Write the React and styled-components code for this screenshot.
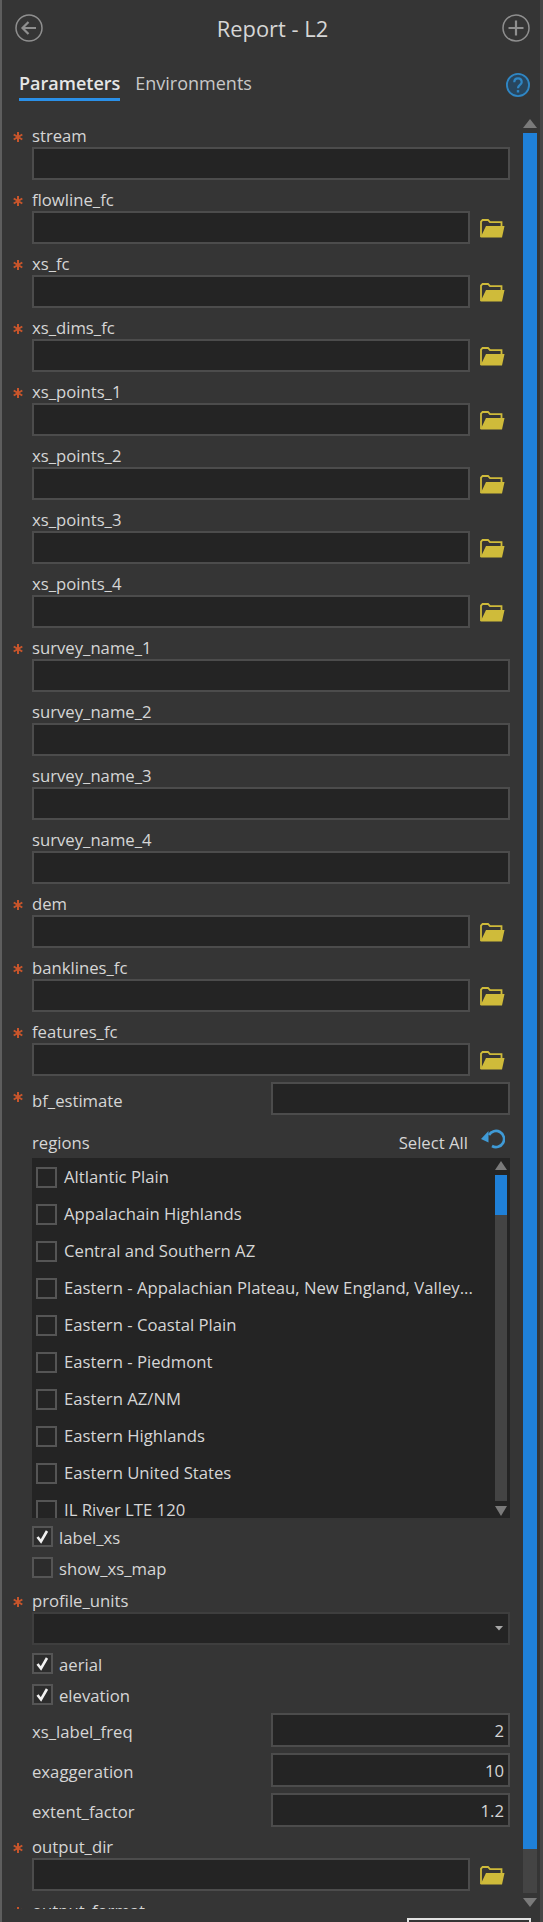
import React from 'react'
import styled, { createGlobalStyle } from 'styled-components'

const GlobalStyle = createGlobalStyle`
  html, body {
    margin: 0;
    padding: 0;
    background: #353535;
  }
  * {
    box-sizing: border-box;
  }
`

const Panel = styled.div`
  width: 543px;
  height: 1922px;
  overflow: hidden;
  background: #353535;
  border-left: 2px solid #5e5e5e;
  border-right: 3px solid #454545;
  color: #d6d6d6;
  font-family: "Open Sans", "Noto Sans", sans-serif;
  font-size: 16.7px;
`

const Header = styled.header`
  height: 56px;
  padding: 0 10px 0 13px;
  display: flex;
  align-items: center;
  justify-content: space-between;
`

const Title = styled.h1`
  margin: 0;
  font-size: 21.9px;
  font-weight: 400;
  color: #d6d6d6;
`

const TabBar = styled.div`
  height: 55px;
  display: flex;
  align-items: flex-start;
  padding: 12px 10px 0 17px;
  gap: 15px;
`

const Tab = styled.div`
  height: 33px;
  font-size: 18px;
  line-height: 30px;
  font-weight: ${p => (p.$active ? 600 : 400)};
  color: ${p => (p.$active ? '#e6e6e6' : '#c8c8c8')};
  border-bottom: 3px solid ${p => (p.$active ? '#2a90e8' : 'transparent')};
`

const Help = styled.svg`
  margin-left: auto;
  margin-top: 5px;
`

const Body = styled.div`
  display: flex;
  align-items: flex-start;
  height: 1798px;
`

const Form = styled.div`
  width: 510px;
  height: 1798px;
  overflow: hidden;
  padding: 14px 2px 0 11px;
`

const Row = styled.div`
  display: flex;
  align-items: flex-start;
  flex: none;
  margin-top: ${p => p.$mt || 0}px;
`

const StarIcon = styled.svg`
  width: 10px;
  height: 10px;
  margin: ${p => p.$top ?? 7}px 9px 0 0;
  flex: none;
`

const Label = styled.div`
  height: 22px;
  line-height: 22px;
  padding-left: ${p => (p.$bare ? '19px' : '0')};
  color: #d6d6d6;
`

const Field = styled.div`
  height: 33px;
  margin-bottom: ${p => p.$mb ?? 9}px;
  padding-left: 19px;
  display: flex;
  align-items: flex-start;
  gap: 10px;
`

const Input = styled.div`
  flex: none;
  width: ${p => (p.$short ? '438px' : '478px')};
  height: 33px;
  background: #242424;
  border: 2px solid #4c4c4c;
`

const SelectInput = styled(Input)`
  border-color: #3e3e3e;
  position: relative;
`

const Chevron = styled.svg`
  position: absolute;
  right: 5px;
  top: 12px;
`

const InlineRow = styled.div`
  display: flex;
  align-items: flex-start;
  justify-content: space-between;
  height: ${p => p.$h || 34}px;
  margin-bottom: ${p => p.$mb || 0}px;
  padding-left: ${p => (p.$bare ? '19px' : '0')};
`

const InlineLabel = styled.span`
  line-height: 22px;
  padding-top: 8px;
`

const InlineInput = styled(Input)`
  width: 239px;
  height: ${p => p.$h || 34}px;
  padding-right: 4px;
  text-align: right;
  line-height: 32px;
`

const RegionsHead = styled.div`
  height: 43px;
  padding: 11px 5px 0 19px;
  display: flex;
  align-items: center;
  justify-content: space-between;
`

const SelectAll = styled.div`
  display: flex;
  align-items: center;
  gap: 13px;
`

const UndoIcon = styled.svg`
  margin-top: -6px;
`

const List = styled.div`
  margin-left: 19px;
  width: 478px;
  height: 360px;
  background: #242424;
  overflow: hidden;
  position: relative;
  padding: 9px 0 0 4px;
`

const Item = styled.div`
  height: 37px;
  display: flex;
  align-items: flex-start;
  gap: 7px;
  line-height: 19px;
  color: #d6d6d6;
  white-space: nowrap;
`

const Box = styled.div`
  width: 21px;
  height: 21px;
  flex: none;
  border: 2px solid #555;
  background: ${p => (p.$dark ? '#2c2c2c' : 'transparent')};
  display: flex;
  align-items: center;
  justify-content: center;
`

const Check = styled.div`
  height: ${p => p.$h || 31}px;
  margin-top: ${p => p.$mt || 0}px;
  margin-left: 19px;
  display: flex;
  align-items: flex-start;
  gap: 6px;
  line-height: 24px;
  color: #d6d6d6;
`

const Track = styled.div`
  width: ${p => p.$w}px;
  flex: none;
  display: flex;
  flex-direction: column;
  align-items: center;
`

const MainBar = styled(Track)`
  height: 1798px;
  margin-left: 11px;
  padding-top: 8px;
`

const ListBar = styled(Track)`
  position: absolute;
  top: 3px;
  right: 3px;
  height: 356px;
`

const Arrow = styled.div`
  width: 0;
  height: 0;
  flex: none;
  border-left: ${p => p.$w}px solid transparent;
  border-right: ${p => p.$w}px solid transparent;
  ${p => (p.$down ? 'border-top' : 'border-bottom')}: ${p => p.$h}px solid #7a7a7a;
`

const Rail = styled.div`
  width: 100%;
  height: ${p => p.$h}px;
  margin: 5px 0;
  background: #444;
  flex: none;
`

const Thumb = styled.div`
  height: ${p => p.$h}px;
  background: #1f80d8;
`

const Footer = styled.div`
  height: 13px;
  overflow: hidden;
  padding: 9px 9px 0 0;
  display: flex;
  justify-content: flex-end;
`

const NextButton = styled.div`
  width: 124px;
  height: 30px;
  flex: none;
  border: 2px solid #e2e2e2;
`

const FolderIcon = styled.svg`
  flex: none;
  margin-top: 8px;
`

const CircleIcon = ({ children }) => (
  <svg width="28" height="28" viewBox="0 0 28 28" fill="none" stroke="#8f8f8f" strokeWidth="2">
    <circle cx="14" cy="14" r="13" strokeWidth="1.5" />
    {children}
  </svg>
)

const Folder = () => (
  <FolderIcon width="25" height="19" viewBox="0 0 25 19">
    <path d="M1 18V2.5L2.5 1H8l2 2.2h11.5V7" fill="none" stroke="#cfbb3a" strokeWidth="1.8" />
    <path d="M6 7h18.5L22 18.5H0.5z" fill="#cfbb3a" />
  </FolderIcon>
)

const Tick = () => (
  <svg width="15" height="15" viewBox="0 0 15 15" fill="none" stroke="#f2f2f2" strokeWidth="2.6">
    <path d="M2.5 8 6 12.5 12 2" />
  </svg>
)

const Star = ({ top }) => (
  <StarIcon $top={top} viewBox="0 0 10 10" stroke="#c8552b" strokeWidth="2">
    <path d="M5 0v10M.7 2.5l8.6 5M.7 7.5l8.6-5" />
  </StarIcon>
)

const Param = ({ name, required, folder, mb }) => (
  <>
    {required ? (
      <Row>
        <Star />
        <Label>{name}</Label>
      </Row>
    ) : (
      <Label $bare>{name}</Label>
    )}
    <Field $mb={mb}>
      <Input $short={folder} />
      {folder && <Folder />}
    </Field>
  </>
)

const regions = [
  'Altlantic Plain',
  'Appalachain Highlands',
  'Central and Southern AZ',
  'Eastern - Appalachian Plateau, New England, Valley...',
  'Eastern - Coastal Plain',
  'Eastern - Piedmont',
  'Eastern AZ/NM',
  'Eastern Highlands',
  'Eastern United States',
  'IL River LTE 120',
]

const topParams = [
  ['stream', true, false],
  ['flowline_fc', true, true],
  ['xs_fc', true, true],
  ['xs_dims_fc', true, true],
  ['xs_points_1', true, true],
  ['xs_points_2', false, true],
  ['xs_points_3', false, true],
  ['xs_points_4', false, true],
  ['survey_name_1', true, false],
  ['survey_name_2', false, false],
  ['survey_name_3', false, false],
  ['survey_name_4', false, false],
  ['dem', true, true],
  ['banklines_fc', true, true],
  ['features_fc', true, true, 6],
]

export default function App() {
  return (
    <Panel>
      <GlobalStyle />
      <Header>
        <CircleIcon>
          <path d="M21 14H8M13.5 8 7.5 14l6 6" strokeWidth="2.2" />
        </CircleIcon>
        <Title>Report - L2</Title>
        <CircleIcon>
          <path d="M14 6.5v15M6.5 14h15" strokeWidth="2.2" />
        </CircleIcon>
      </Header>
      <TabBar>
        <Tab $active>Parameters</Tab>
        <Tab>Environments</Tab>
        <Help width="24" height="24" viewBox="0 0 26 26" fill="#28465e" stroke="#2f86c4" strokeWidth="2">
          <circle cx="13" cy="13" r="12" />
          <path d="M9 10c0-5.5 8-5.5 8 0 0 3-4 3-4 6.5" fill="none" strokeWidth="2.4" />
          <path d="M13 18.5v2.6" fill="none" strokeWidth="2.6" />
        </Help>
      </TabBar>
      <Body>
        <Form>
          {topParams.map(([name, required, folder, mb]) => (
            <Param key={name} name={name} required={required} folder={folder} mb={mb} />
          ))}
          <InlineRow $h={33}>
            <Row $mt={8}>
              <Star top={2} />
              <Label>bf_estimate</Label>
            </Row>
            <InlineInput $h={33} />
          </InlineRow>
          <RegionsHead>
            <span>regions</span>
            <SelectAll>
              <span>Select All</span>
              <UndoIcon width="24" height="20" viewBox="0 0 24 20" fill="none" stroke="#3f9ad6" strokeWidth="2.6">
                <path d="M8 6A8.06 8.06 0 1 1 11 17" />
                <path d="M0 10 7.5 2v11.5z" fill="#3f9ad6" stroke="none" />
              </UndoIcon>
            </SelectAll>
          </RegionsHead>
          <List>
            {regions.map(r => (
              <Item key={r}>
                <Box />
                {r}
              </Item>
            ))}
            <ListBar $w={12}>
              <Arrow $w={6} $h={9} />
              <Rail $h={326}>
                <Thumb $h={40} />
              </Rail>
              <Arrow $w={6} $h={10} $down />
            </ListBar>
          </List>
          <Check $mt={8}>
            <Box $dark>
              <Tick />
            </Box>
            label_xs
          </Check>
          <Check $h={33}>
            <Box $dark />
            show_xs_map
          </Check>
          <Row>
            <Star />
            <Label>profile_units</Label>
          </Row>
          <Field $mb={8}>
            <SelectInput>
              <Chevron width="8" height="5" viewBox="0 0 8 5">
                <path d="M0 0h8L4 4.5z" fill="#a8a8a8" />
              </Chevron>
            </SelectInput>
          </Field>
          <Check>
            <Box $dark>
              <Tick />
            </Box>
            aerial
          </Check>
          <Check $h={29}>
            <Box $dark>
              <Tick />
            </Box>
            elevation
          </Check>
          <InlineRow $bare $mb={6}>
            <InlineLabel>xs_label_freq</InlineLabel>
            <InlineInput>2</InlineInput>
          </InlineRow>
          <InlineRow $bare $mb={6}>
            <InlineLabel>exaggeration</InlineLabel>
            <InlineInput>10</InlineInput>
          </InlineRow>
          <InlineRow $bare $mb={9}>
            <InlineLabel>extent_factor</InlineLabel>
            <InlineInput>1.2</InlineInput>
          </InlineRow>
          <Param name="output_dir" required folder mb={9} />
          <Row>
            <Star />
            <Label>output_format</Label>
          </Row>
        </Form>
        <MainBar $w={14}>
          <Arrow $w={7} $h={9} />
          <Rail $h={1760}>
            <Thumb $h={1716} />
          </Rail>
          <Arrow $w={7} $h={9} $down />
        </MainBar>
      </Body>
      <Footer>
        <NextButton />
      </Footer>
    </Panel>
  )
}
